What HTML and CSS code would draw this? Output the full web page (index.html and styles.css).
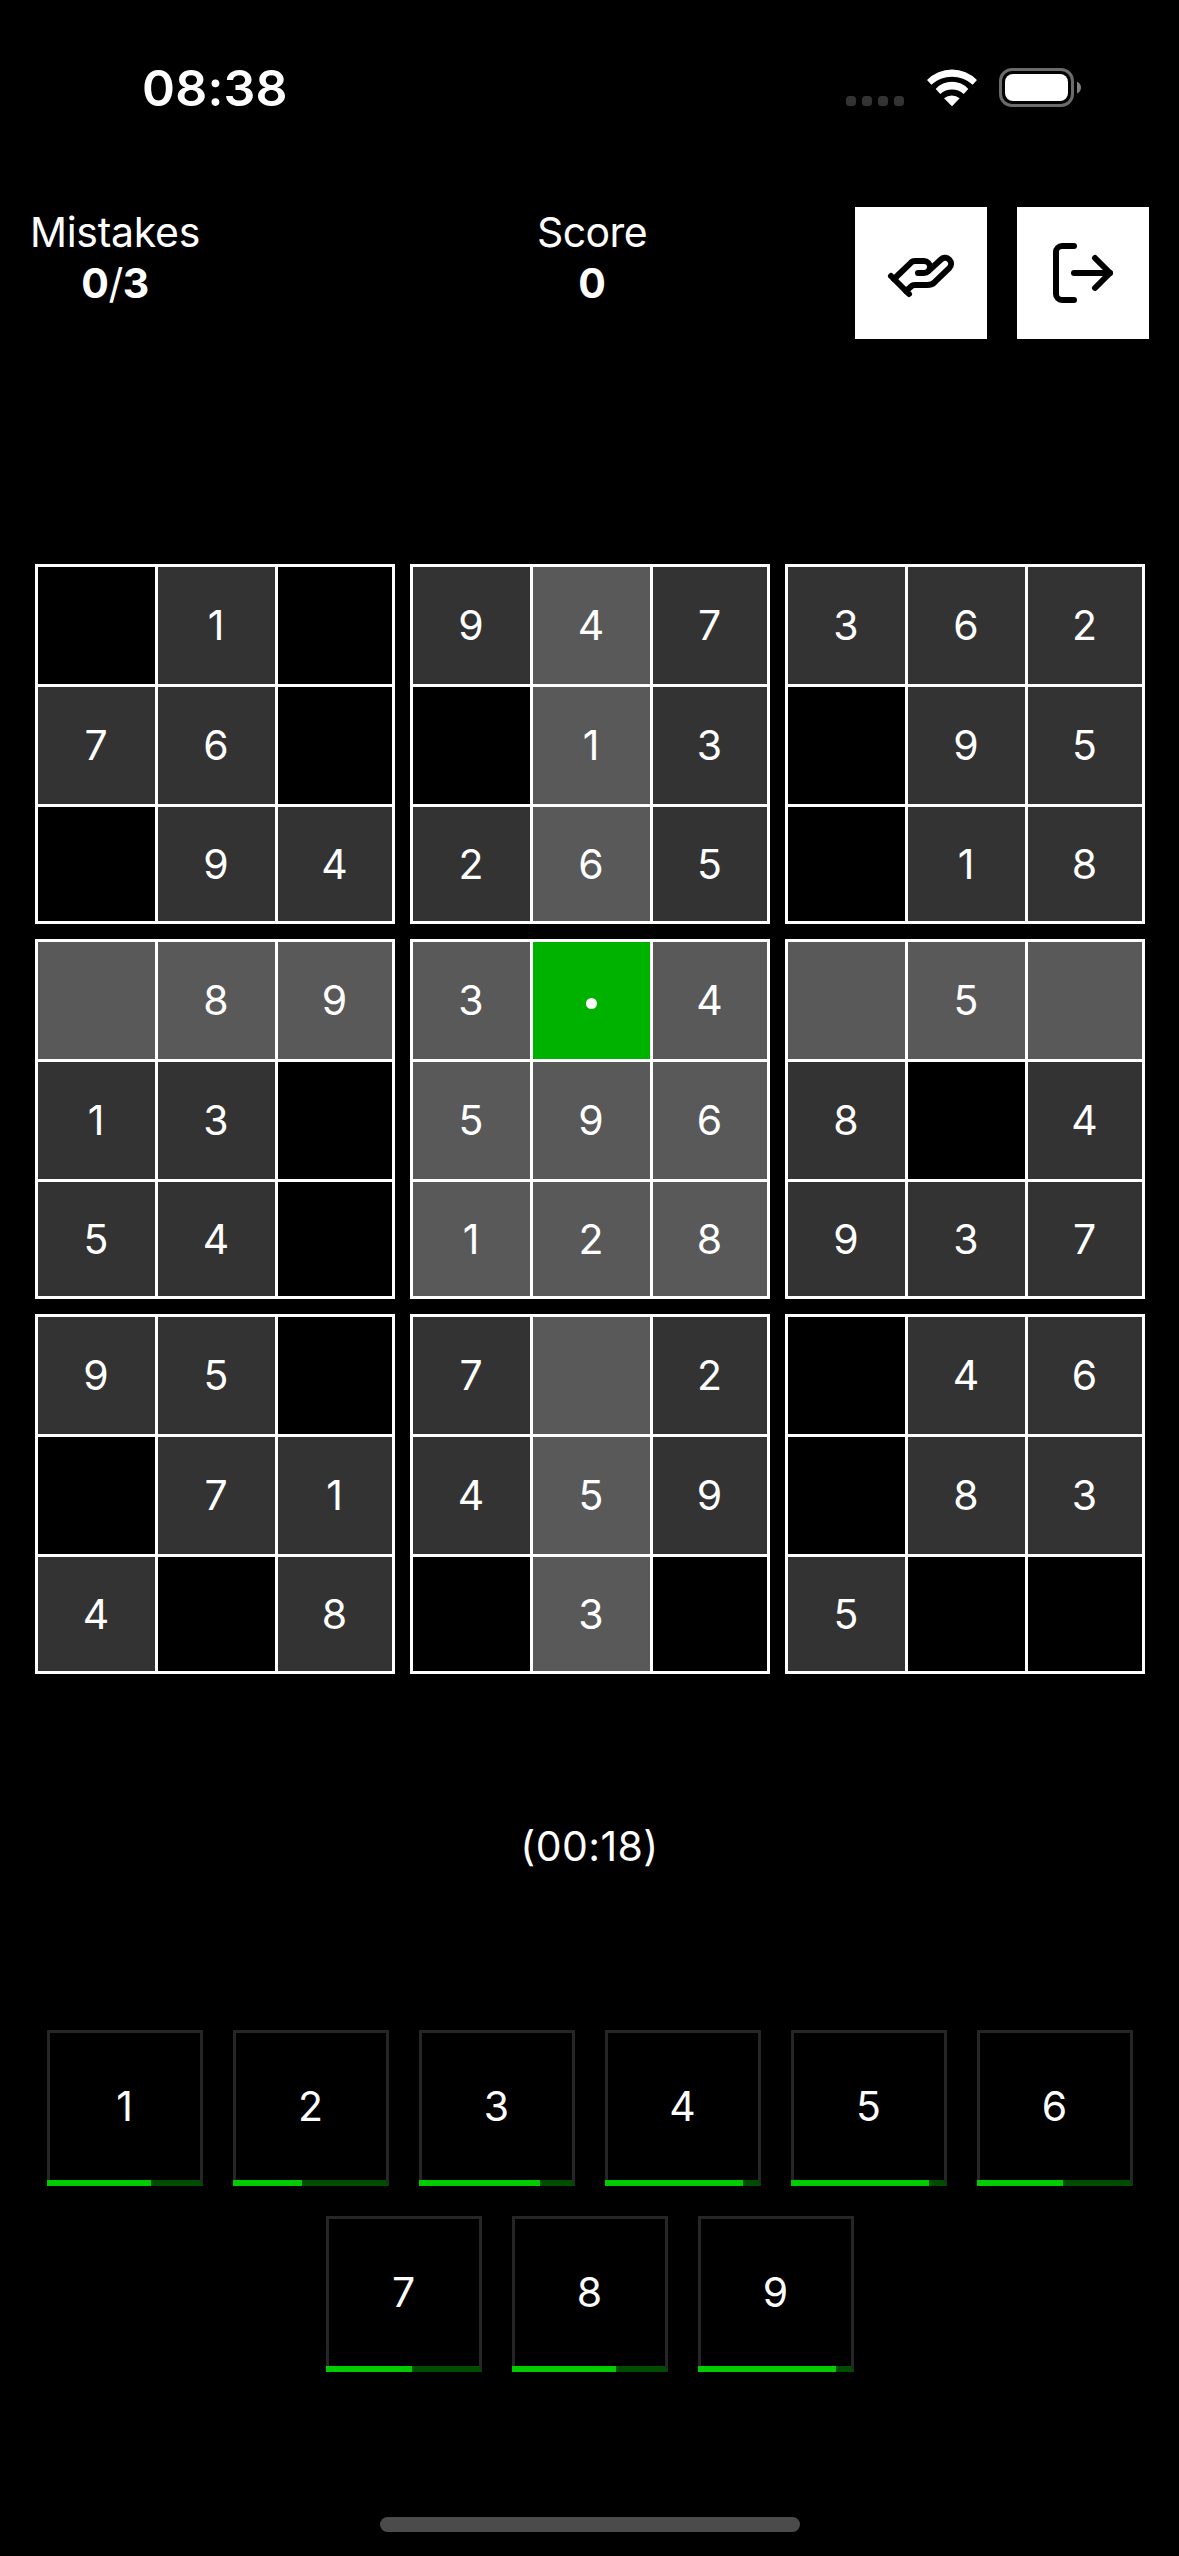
FILE: index.html
```
<!DOCTYPE html>
<html lang="en">
<head>
<meta charset="utf-8">
<title>Sudoku</title>
<link rel="stylesheet" href="styles.css">
</head>
<body>
<div class="status">
  <div class="clock">08:38</div>
  <div class="indicators">
    <div class="signal"><i></i><i></i><i></i><i></i></div>
    <svg class="wifi" viewBox="0 0 150 112"><path d="M0 33A105 105 0 0 1 150 33L137 47A92 92 0 0 0 13 47Z"/><path d="M26 60A66 66 0 0 1 124 60L110 75A53 53 0 0 0 40 75Z"/><path d="M51 88A36 36 0 0 1 98 88L75 112Z"/></svg>
    <svg class="battery" viewBox="0 0 83 39"><rect class="shell" x="1.5" y="1.5" width="72" height="36" rx="11.5"/><rect class="charge" x="6" y="6" width="63" height="27" rx="8"/><path class="nub" d="M78 13.5Q82 15.5 82 19.5T78 25.5Z"/></svg>
  </div>
</div>
<header class="header">
  <div class="stat mistakes"><span>Mistakes</span><b>0<em>/</em>3</b></div>
  <div class="stat score"><span>Score</span><b>0</b></div>
  <div class="actions">
    <button class="action" aria-label="Hint"><svg viewBox="0 0 24 24"><path d="M11 12h2a2 2 0 1 0 0-4h-3c-.6 0-1.1.2-1.4.6L3 14"/><path d="m7 18 1.6-1.4c.3-.4.8-.6 1.4-.6h4c1.1 0 2.1-.4 2.8-1.2l4.6-4.4a2 2 0 0 0-2.75-2.91l-4.2 3.9"/><path d="m2 13 6 6"/></svg></button>
    <button class="action" aria-label="Leave"><svg viewBox="0 0 24 24"><path d="M9 3H5a2 2 0 0 0-2 2v14a2 2 0 0 0 2 2h4"/><path d="M9 12h12"/><path d="m16 7 5 5-5 5"/></svg></button>
  </div>
</header>
<main class="board" id="board"></main>
<div class="timer">(00:18)</div>
<div class="pad" id="pad"></div>
<div class="home"></div>
<script src="app.js"></script>
</body>
</html>
```
FILE: styles.css
```
* { box-sizing: border-box; }

body {
  margin: 0;
  width: 1179px;
  height: 2556px;
  overflow: hidden;
  display: flex;
  flex-direction: column;
  align-items: center;
  background: #000;
  color: #fff;
  font-family: Inter, "Liberation Sans", sans-serif;
  font-size: 41px;
  line-height: 51px;
}

.status {
  width: 100%;
  height: 207px;
  padding: 57px 97px 0 142px;
  display: flex;
  justify-content: space-between;
  align-items: flex-start;
}
.clock { font-size: 50px; font-weight: 600; line-height: 62px; letter-spacing: 0.2px; }
.indicators { display: flex; align-items: flex-start; padding-top: 11px; }
.signal { display: flex; gap: 6px; padding-top: 28px; margin-right: 23px; }
.signal i { width: 10px; height: 10px; border-radius: 3.5px; background: #333; }
.wifi { width: 50px; height: 37.3px; margin: 1px 22px 0 0; fill: #fff; }
.battery { width: 83px; height: 39px; }
.shell { fill: none; stroke: #6b6b6b; stroke-width: 3; }
.charge { fill: #fff; }
.nub { fill: #808080; }

.header {
  width: 100%;
  height: 357px;
  padding: 0 30px;
  display: grid;
  grid-template-columns: 1fr auto 1fr;
  align-items: start;
}
.stat { display: flex; flex-direction: column; align-items: center; }
.stat span { letter-spacing: -0.3px; }
.mistakes { justify-self: start; }
.score { padding-left: 5px; }
.score span { letter-spacing: -0.6px; }
.stat b { font-weight: 700; letter-spacing: -0.4px; }
.stat em { font-style: normal; font-weight: 400; }
.actions { display: flex; gap: 30px; justify-self: end; }
.action {
  width: 132px;
  height: 132px;
  padding: 0;
  border: 0;
  background: #fff;
  display: flex;
  align-items: center;
  justify-content: center;
}
.action svg {
  width: 72px;
  height: 72px;
  fill: none;
  stroke: #000;
  stroke-width: 2;
  stroke-linecap: round;
  stroke-linejoin: round;
}

.board {
  display: grid;
  grid-template-columns: repeat(3, 360px);
  gap: 15px;
  margin-left: 1px;
}
.box {
  height: 360px;
  padding: 3px;
  display: grid;
  grid-template: 117px 117px 114px / 117px 117px 114px;
  gap: 3px;
  background: #fff;
}
.cell {
  padding-right: 1px;
  display: flex;
  align-items: center;
  justify-content: center;
  background: #000;
}
.given { background: #333; }
.related { background: #595959; }
.selected { background: #00b200; }
.dot { width: 11px; height: 11px; margin-top: 6px; border-radius: 50%; background: #fff; }

.timer { margin-top: 147px; letter-spacing: 0.4px; }

.pad {
  width: 1087px;
  margin: 158px 0 0 1px;
  display: flex;
  flex-wrap: wrap;
  justify-content: center;
  gap: 30px;
}
.key {
  position: relative;
  width: 156px;
  height: 156px;
  padding-right: 1px;
  border: 3px solid #262626;
  border-bottom: 6px solid #004c00;
  display: flex;
  align-items: center;
  justify-content: center;
}
.fill { position: absolute; left: -3px; bottom: -6px; height: 6px; background: #00cc00; }

.home {
  width: 420px;
  height: 15px;
  margin: auto 0 24px 1px;
  border-radius: 7.5px;
  background: #4b4b4b;
}
```
FILE: app.js
```
const rows = [
  " 1 947362",
  "76  13 95",
  " 94265 18",
  " 893*4 5 ",
  "13 5968 4",
  "54 128937",
  "95 7 2 46",
  " 71459 83",
  "4 8 3 5  "
];
const active = { row: 3, col: 4 };

function makeCell(row, col) {
  const value = rows[row][col];
  const cell = document.createElement("div");
  const sameBox = Math.floor(row / 3) === Math.floor(active.row / 3) &&
    Math.floor(col / 3) === Math.floor(active.col / 3);
  let state = value === " " ? "" : "given";
  if (sameBox || row === active.row || col === active.col) state = "related";
  if (row === active.row && col === active.col) {
    state = "selected";
    cell.innerHTML = '<span class="dot"></span>';
  } else {
    cell.textContent = value.trim();
  }
  cell.className = ("cell " + state).trim();
  return cell;
}

const board = document.getElementById("board");
for (let b = 0; b < 9; b++) {
  const box = document.createElement("div");
  box.className = "box";
  for (let i = 0; i < 9; i++) {
    box.append(makeCell(Math.floor(b / 3) * 3 + Math.floor(i / 3), (b % 3) * 3 + i % 3));
  }
  board.append(box);
}

const placed = [6, 4, 7, 8, 8, 5, 5, 6, 8];
const pad = document.getElementById("pad");
placed.forEach((count, i) => {
  const key = document.createElement("div");
  key.className = "key";
  key.textContent = i + 1;
  const fill = document.createElement("span");
  fill.className = "fill";
  fill.style.width = Math.floor(156 * count / 9) + "px";
  key.append(fill);
  pad.append(key);
});
```
